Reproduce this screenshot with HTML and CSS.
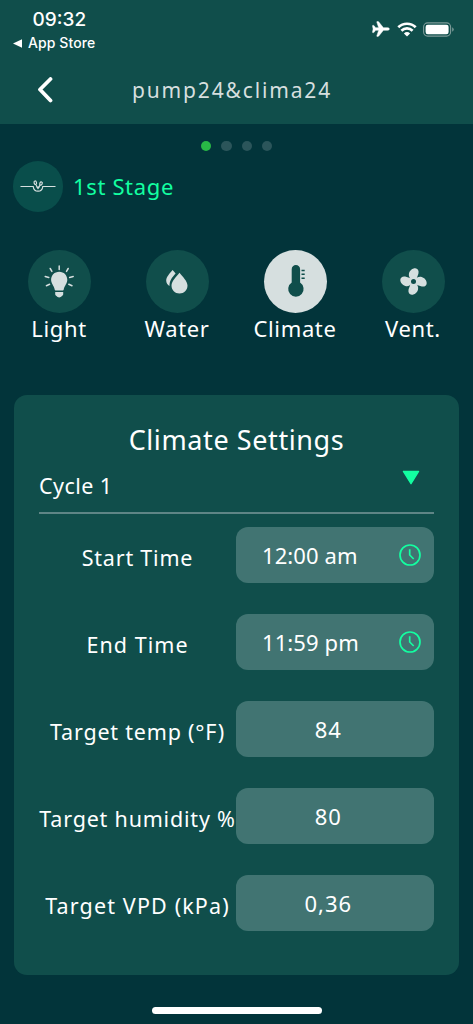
FILE: index.html
```html
<!DOCTYPE html>
<html lang="en">
<head>
<meta charset="utf-8">
<meta name="viewport" content="width=device-width, initial-scale=1">
<title>Climate Settings</title>
<link rel="stylesheet" href="styles.css">
</head>
<body>
<div class="screen">
  <header class="header">
    <div class="status">
      <div class="status-left">
        <div class="clock">09:32</div>
        <div class="return-app">
          <svg width="9" height="9" viewBox="0 0 9 9"><path d="M9 .3v8.4L0 4.5z" fill="#fff"/></svg>
          <span>App Store</span>
        </div>
      </div>
      <div class="status-right">
        <svg class="plane" width="18" height="16" viewBox="0 0 18 16"><path fill="#fff" stroke="#fff" stroke-width=".5" d="M17.4 8c0 .8-1 1.3-2.3 1.3h-3.7l-4.600 5.700c-.3.3-.6.400-.9.400h-.8c-.3 0-.4-.2-.3-.5l1.900-5.600H3.600L2.100 11.300c-.2.200-.3.300-.5.300H.800c-.2 0-.3-.2-.3-.4L1.100 8 .500 4.800c0-.2.100-.4.300-.4h.8c.2 0 .3.100.5.300l1.500 2h3.100L4.800 1.100c-.1-.3 0-.5.300-.5h.8c.3 0 .6.100.9.400l4.600 5.700h3.700c1.300 0 2.300.5 2.300 1.300z"/></svg>
        <svg class="wifi" width="20" height="15" viewBox="0 0 20 15"><g fill="none" stroke="#fff" stroke-width="2.700"><path d="M1.300 5.300a12.400 12.400 0 0 1 17.400 0"/><path d="M4.400 8.700a8 8 0 0 1 11.200 0"/></g><path fill="#fff" d="M6.900 11.500a4.500 4.500 0 0 1 6.200 0L10 14.500z"/></svg>
        <svg class="battery" width="32" height="15" viewBox="0 0 32 15"><rect x=".6" y=".9" width="27" height="13.200" rx="4" fill="none" stroke="#7d9b99" stroke-width="1.100"/><rect x="2.600" y="2.800" width="23" height="9.400" rx="2.200" fill="#fff"/><path d="M29.200 5.300q1.500.7 1.500 2.200t-1.500 2.200z" fill="#7d9b99"/></svg>
      </div>
    </div>
    <div class="navbar">
      <svg class="back" width="16" height="26" viewBox="0 0 16 26"><path d="M13.500 2 3 12.500l10.500 11" fill="none" stroke="#fff" stroke-width="3.800" stroke-linecap="round" stroke-linejoin="round"/></svg>
      <h1 class="device-name">pump24&amp;clima24</h1>
    </div>
  </header>

  <div class="pager"><i class="dot dot-on"></i><i class="dot"></i><i class="dot"></i><i class="dot"></i></div>

  <div class="stage">
    <div class="stage-icon">
      <svg class="sprout" width="36" height="14" viewBox="0 0 36 14"><g fill="none" stroke="#d6dfdf" stroke-width="1.200"><path d="M.5 7.500h12.700c.3 3 2 4.700 4.800 4.700s4.500-1.700 4.800-4.700h12.700"/><ellipse cx="15.300" cy="3.700" rx="1.200" ry="1.800" transform="rotate(-15 15.300 3.700)"/><ellipse cx="21" cy="4.500" rx="1.200" ry="1.600" transform="rotate(25 21 4.500)"/><path d="M16 5.700c.3 1.300 1 2 2 3.500.7-1.600 1.600-2.500 2.300-3.200M16.500 7.500l1.500 2 1.600-2"/></g></svg>
    </div>
    <span class="stage-name">1st Stage</span>
  </div>

  <nav class="tabs">
    <div class="tab">
      <div class="tab-icon">
        <svg width="63" height="63" viewBox="0 0 63 63"><path fill="#d6dfdf" d="M31.200 21.800c4.700 0 8.100 3.600 8.100 8 0 3.800-2.800 5.800-3.600 9.600-.1.800-.5 1.100-1.200 1.100h-6.600c-.7 0-1.100-.3-1.200-1.100-.8-3.800-3.600-5.800-3.600-9.600 0-4.400 3.400-8 8.100-8zM27.200 42h8v2.300c0 1.400-1.200 1.500-1.600 2-.5.800-1.200 1.100-2.400 1.100s-1.900-.3-2.400-1.100c-.4-.5-1.600-.6-1.600-2z"/><path d="M31.200 16v3.400M22.200 18.500l1.700 2.900M40.200 18.500l-1.700 2.900M17.200 26.500l3.600.9M45.200 26.500l-3.600.9M18.400 35.700l3.200-1.500M44 35.700l-3.200-1.500" stroke="#d6dfdf" stroke-width="1.500" stroke-linecap="round"/></svg>
      </div>
      <span class="tab-label">Light</span>
    </div>
    <div class="tab">
      <div class="tab-icon">
        <svg width="63" height="63" viewBox="0 0 63 63"><path fill="#d6dfdf" d="M33.500 22.800c3 3.600 8 8.600 8 12.700 0 4.700-3.500 8-8 8s-8-3.300-8-8c0-4.100 5-9.100 8-12.700zM26.600 20.100c1.100 1.100 2.100 2.200 3 3.400-3.700 4-6.100 7.200-6.100 12.400-2-.9-3.300-2.700-3.300-5.300 0-3.600 3.600-7.200 6.400-10.500z"/></svg>
      </div>
      <span class="tab-label">Water</span>
    </div>
    <div class="tab">
      <div class="tab-icon tab-icon-on">
        <svg width="63" height="63" viewBox="0 0 63 63"><path fill="#104e4b" d="M27.700 19.300a4.200 4.200 0 0 1 8.400 0v13.300a7.700 7.700 0 1 1-8.400 0z"/><path d="M37.500 20.500h3.200M37.500 24.300h3.200M37.500 28.200h3.200" stroke="#104e4b" stroke-width="1.400"/></svg>
      </div>
      <span class="tab-label">Climate</span>
    </div>
    <div class="tab">
      <div class="tab-icon">
        <svg width="63" height="63" viewBox="0 0 63 63"><g fill="#d6dfdf"><path id="blade" d="M30 30.500C27.500 28.500 26.300 26 27 23.300c.8-2.900 3.500-5.100 6.200-5 2.500.1 3.800 2.300 3.300 4.900-.4 2.200-1.700 3.600-2.300 7.800z"/><use href="#blade" transform="rotate(90 31.500 31.500)"/><use href="#blade" transform="rotate(180 31.500 31.500)"/><use href="#blade" transform="rotate(270 31.500 31.500)"/><circle cx="31.500" cy="31.500" r="4"/></g><circle cx="31.500" cy="31.500" r="2.500" fill="#104e4b"/></svg>
      </div>
      <span class="tab-label">Vent.</span>
    </div>
  </nav>

  <main class="card">
    <h2 class="card-title">Climate Settings</h2>
    <div class="cycle">
      <span class="cycle-name">Cycle 1</span>
      <svg class="caret" width="18" height="15" viewBox="0 0 18 15"><path d="M1.400 1.300h15.200L9 13.700z" fill="#13ffa1" stroke="#13ffa1" stroke-width="1.300" stroke-linejoin="round"/></svg>
    </div>
    <div class="rows">
      <div class="row">
        <label class="label">Start Time</label>
        <div class="field field-time"><span>12:00 am</span>
          <svg class="time-icon" width="22" height="22" viewBox="0 0 22 22"><g fill="none" stroke="#13ffa1" stroke-width="1.700"><circle cx="11" cy="11" r="10"/><path d="M10.700 5.300V11l4 4"/></g></svg>
        </div>
      </div>
      <div class="row">
        <label class="label label-end">End Time</label>
        <div class="field field-time"><span>11:59 pm</span>
          <svg class="time-icon" width="22" height="22" viewBox="0 0 22 22"><g fill="none" stroke="#13ffa1" stroke-width="1.700"><circle cx="11" cy="11" r="10"/><path d="M10.700 5.300V11l4 4"/></g></svg>
        </div>
      </div>
      <div class="row">
        <label class="label">Target temp (°F)</label>
        <div class="field"><span class="number">84</span></div>
      </div>
      <div class="row">
        <label class="label">Target humidity %</label>
        <div class="field"><span class="number">80</span></div>
      </div>
      <div class="row">
        <label class="label label-vpd">Target VPD (kPa)</label>
        <div class="field"><span class="number">0,36</span></div>
      </div>
    </div>
  </main>
  <div class="home-indicator"></div>
</div>
</body>
</html>
```

FILE: styles.css
```css
* { box-sizing: border-box; }
body { margin: 0; background: #02343a; }
svg { display: block; flex: none; }
.screen {
  width: 473px;
  height: 1024px;
  overflow: hidden;
  background: #02343a;
  color: #fff;
  font-family: "Noto Sans", sans-serif;
  font-size: 22px;
  line-height: 30px;
  white-space: nowrap;
}

.header { height: 124px; background: #104e4b; }
.status { display: flex; justify-content: space-between; height: 58px; padding: 8px 18px 0 13px; font-family: Inter, sans-serif; }
.clock { padding-left: 19.500px; font-size: 19px; line-height: 24px; font-weight: 500; }
.return-app { display: flex; align-items: center; gap: 6px; font-size: 14px; line-height: 22px; font-weight: 500; letter-spacing: .1px; }
.status-right { display: flex; align-items: center; height: 42px; }
.wifi { margin-left: 7px; }
.battery { margin-left: 6px; }
.navbar { display: flex; align-items: center; height: 64px; padding-left: 37px; }
.device-name { margin: 0 0 0 79px; font-size: 21px; font-weight: 400; letter-spacing: 1.850px; color: #d6dfdf; }

.pager { display: flex; justify-content: center; gap: 10px; padding-top: 17px; height: 37px; }
.dot { width: 10.400px; height: 10.400px; border-radius: 50%; background: #2b555a; }
.dot-on { background: #28b946; }

.stage { display: flex; align-items: center; gap: 10px; height: 51px; padding-left: 12.500px; color: #13ffa1; }
.stage-icon { display: grid; place-items: center; width: 50.500px; height: 50.500px; border-radius: 50%; background: #094e4b; }
.sprout { margin-top: -2px; }
.stage-name { padding-bottom: 2px; letter-spacing: .650px; }

.tabs { display: grid; grid-template-columns: repeat(4, 118px); height: 182px; padding-top: 37.500px; }
.tab { display: flex; flex-direction: column; align-items: center; }
.tab-icon { width: 63px; height: 63px; border-radius: 50%; background: #104e4b; }
.tab-icon-on { background: #d6dfdf; }
.tab-label { letter-spacing: .650px; }

.card { width: 445px; height: 580px; margin: .500px 0 0 14px; padding: 27px 25px 0; border-radius: 13px; background: #104e4b; }
.card-title { margin: 0; font-size: 27px; line-height: 36px; font-weight: 400; letter-spacing: .600px; text-align: center; }
.cycle { display: flex; justify-content: space-between; align-items: flex-start; height: 56px; padding: 12px 14px 0 0; border-bottom: 2px solid #5f8586; }
.cycle-name { padding-top: 1px; font-size: 21.500px; letter-spacing: .450px; }
.rows { display: grid; gap: 31px; padding-top: 13px; }
.row { display: grid; grid-template-columns: 197px 197.500px; height: 56px; }
.label { padding-top: 16px; font-size: 21.500px; letter-spacing: .800px; text-align: center; }
.label-end { letter-spacing: 1.050px; }
.label-vpd { letter-spacing: 1.150px; }
.field { display: flex; justify-content: center; align-items: center; height: 56px; padding-right: 13px; border-radius: 12px; background: #417472; }
.field-time { justify-content: space-between; padding-left: 26px; letter-spacing: .100px; }
.number { letter-spacing: 1px; }

.home-indicator { width: 170px; height: 7px; margin: 32px 0 0 152px; border-radius: 4px; background: #fff; }
```
